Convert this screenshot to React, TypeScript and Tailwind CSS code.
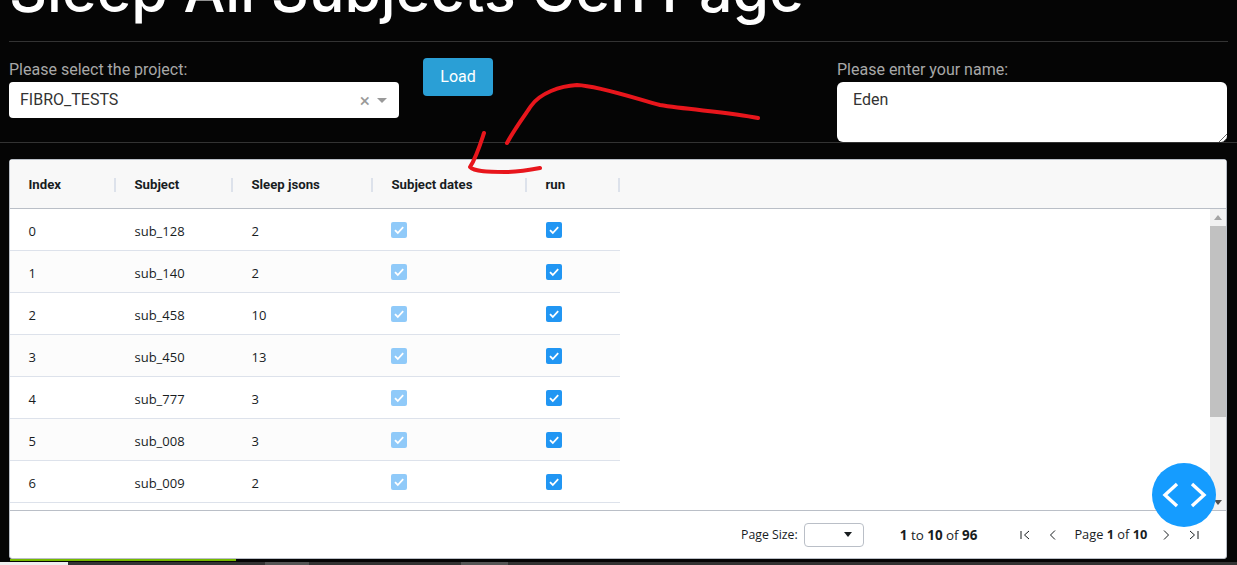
const rows = [
  ["0", "sub_128", "2"],
  ["1", "sub_140", "2"],
  ["2", "sub_458", "10"],
  ["3", "sub_450", "13"],
  ["4", "sub_777", "3"],
  ["5", "sub_008", "3"],
  ["6", "sub_009", "2"],
];

function Check({ light }: { light?: boolean }) {
  return (
    <span className={`flex h-4 w-4 items-center justify-center rounded-[2px] ${light ? "bg-[#90caf9]" : "bg-[#2196f3]"}`}>
      <svg width="12" height="12" viewBox="0 0 12 12" fill="none" stroke="white" strokeWidth="1.8">
        <path d="M2 6.2 L4.8 9 L10.2 3.2" />
      </svg>
    </span>
  );
}

const headers = [
  ["Index", "w-[106px]"],
  ["Subject", "w-[117px]"],
  ["Sleep jsons", "w-[140px]"],
  ["Subject dates", "w-[154px]"],
  ["run", "w-[93px]"],
];

export default function App() {
  return (
    <div className="relative flex h-[565px] w-[1237px] flex-col overflow-hidden bg-[#050505] font-['Roboto',sans-serif]">
      <h1 className="ml-[9px] mt-[-42px] h-[83px] shrink-0 font-['Inter',sans-serif] text-[59px] font-medium leading-[66px] text-white whitespace-nowrap">
        Sleep All Subjects Gen Page
      </h1>
      <div className="mx-[9px] h-px shrink-0 bg-[#333]" />
      <div className="flex h-[100px] shrink-0 pl-[9px] pr-[10px]">
        <div className="mt-[18px] w-[390px]">
          <div className="h-[22px] text-[16px] leading-[19px] text-[#a8a8a8]">Please select the project:</div>
          <div className="flex h-[36px] items-center rounded-[4px] bg-white pl-[11px] pr-[12px] text-[16px] text-[#333]">
            <span className="flex-1">FIBRO_TESTS</span>
            <span className="mr-[7px] text-[19px] leading-none text-[#999]">×</span>
            <span className="h-0 w-0 border-x-[5px] border-t-[5px] border-x-transparent border-t-[#999]" />
          </div>
        </div>
        <button className="ml-[24px] mt-[16px] h-[38px] w-[70px] rounded-[4px] bg-[#2a9fd6] text-[16px] text-white">Load</button>
        <div className="ml-auto mt-[18px] w-[390px]">
          <div className="h-[22px] text-[16px] leading-[19px] text-[#a8a8a8]">Please enter your name:</div>
          <div className="relative h-[60px] rounded-[6px] bg-white pl-[16px] pt-[8px] text-[16px] leading-[19px] text-[#333]">
            Eden
            <svg className="absolute bottom-0 right-0" width="9" height="9" viewBox="0 0 9 9" stroke="#666" strokeWidth="1">
              <path d="M1 9 L9 1 M5 9 L9 5" />
            </svg>
          </div>
        </div>
      </div>
      <div className="h-px shrink-0 bg-[#333]" />
      <div className="mx-[9px] mt-[16px] flex h-[400px] w-[1218px] shrink-0 flex-col rounded-[3px] border border-[#babfc7] bg-white font-['Open_Sans',sans-serif] text-[13px] text-[#181d1f]">
        <div className="flex h-[49px] shrink-0 border-b border-[#babfc7] bg-[#f8f8f8] font-['Roboto',sans-serif] text-[13.2px] font-bold">
          {headers.map(([h, w]) => (
            <div key={h} className={`flex items-center pl-[18.5px] pt-[2px] ${w} relative`}>
              {h}
              <span className="absolute right-0 top-[18px] h-[14px] w-[2px] bg-[#dde2eb]" />
            </div>
          ))}
        </div>
        <div className="flex min-h-0 flex-1 overflow-hidden border-b border-[#babfc7]">
          <div className="w-[610px] shrink-0">
            {rows.map((r, i) => (
              <div key={r[0]} className={`flex h-[42px] items-center border-b border-[#dde2eb] ${i % 2 ? "bg-[#fcfcfc]" : "bg-white"}`}>
                <div className="w-[106px] pl-[18.5px] pt-[4px]">{r[0]}</div>
                <div className="w-[117px] pl-[18.5px] pt-[4px]">{r[1]}</div>
                <div className="w-[140px] pl-[18.5px] pt-[4px]">{r[2]}</div>
                <div className="w-[154px] pl-[18px]"><Check light /></div>
                <div className="w-[93px] pl-[18.5px]"><Check /></div>
              </div>
            ))}
          </div>
          <div className="flex-1" />
          <div className="flex w-[16px] shrink-0 flex-col items-center bg-[#f1f1f1]">
            <span className="mt-[6px] h-0 w-0 border-x-[4px] border-b-[5px] border-x-transparent border-b-[#a3a3a3]" />
            <span className="mt-[6px] h-[191px] w-full bg-[#c1c1c1]" />
            <span className="mt-auto mb-[5px] h-0 w-0 border-x-[4px] border-t-[5px] border-x-transparent border-t-[#505050]" />
          </div>
        </div>
        <div className="flex h-[47px] shrink-0 items-center pt-[1px] font-['Open_Sans',sans-serif] text-[12.3px]">
          <span className="ml-[731px] text-[#181d1f]">Page Size:</span>
          <span className="relative ml-[6px] h-[24px] w-[60px] rounded-[4px] border border-[#babfc7]">
            <span className="absolute right-[11px] top-[8px] h-0 w-0 border-x-[4px] border-t-[5px] border-x-transparent border-t-[#181d1f]" />
          </span>
          <span className="ml-[36px] text-[13.4px]"><b>1</b> to <b>10</b> of <b>96</b></span>
          <svg className="ml-[42px]" width="12" height="12" viewBox="0 0 12 12" fill="none" stroke="#181d1f"><path d="M2 2 V10 M10 2 L5.5 6 L10 10" /></svg>
          <svg className="ml-[16px]" width="12" height="12" viewBox="0 0 12 12" fill="none" stroke="#181d1f"><path d="M8 1.5 L3.5 6 L8 10.5" /></svg>
          <span className="ml-[15px] text-[12.8px]">Page <b>1</b> of <b>10</b></span>
          <svg className="ml-[13px]" width="12" height="12" viewBox="0 0 12 12" fill="none" stroke="#181d1f"><path d="M4 1.5 L8.5 6 L4 10.5" /></svg>
          <svg className="ml-[16px]" width="12" height="12" viewBox="0 0 12 12" fill="none" stroke="#181d1f"><path d="M2 2 L6.5 6 L2 10 M10 2 V10" /></svg>
        </div>
      </div>
      <div className="relative flex-1">
        <div className="ml-[10px] h-[2px] w-[226px] bg-[#76b900]" />
        <div className="mt-[1px] flex h-[3px] bg-[#333]">
          <div className="w-[68px] bg-[#eeeeee]" />
          <div className="ml-[197px] w-[44px] bg-[#555]" />
          <div className="ml-[152px] w-[47px] bg-[#555]" />
        </div>
      </div>

      <svg className="pointer-events-none absolute left-0 top-0" width="1237" height="565" fill="none" stroke="#e8161c" strokeWidth="4" strokeLinecap="round" strokeLinejoin="round">
        <path d="M507 143 C515 128 525 115 531 106 C540 93 560 86 577 85 C600 86 640 100 660 105 C690 110 730 112 758 118" />
        <path d="M484 133 C480 145 476 158 470 167 C474 172 490 172 505 172 C520 172 530 170 540 168" />
      </svg>
      <div className="absolute left-[1152px] top-[463px] h-[64px] w-[64px] rounded-full bg-[#159cff]">
        <svg width="64" height="64" viewBox="0 0 64 64" fill="none" stroke="white" strokeWidth="3.4">
          <path d="M25 21 L13 32 L25 43 M40 21 L52 32 L40 43" />
        </svg>
      </div>
    </div>
  );
}
